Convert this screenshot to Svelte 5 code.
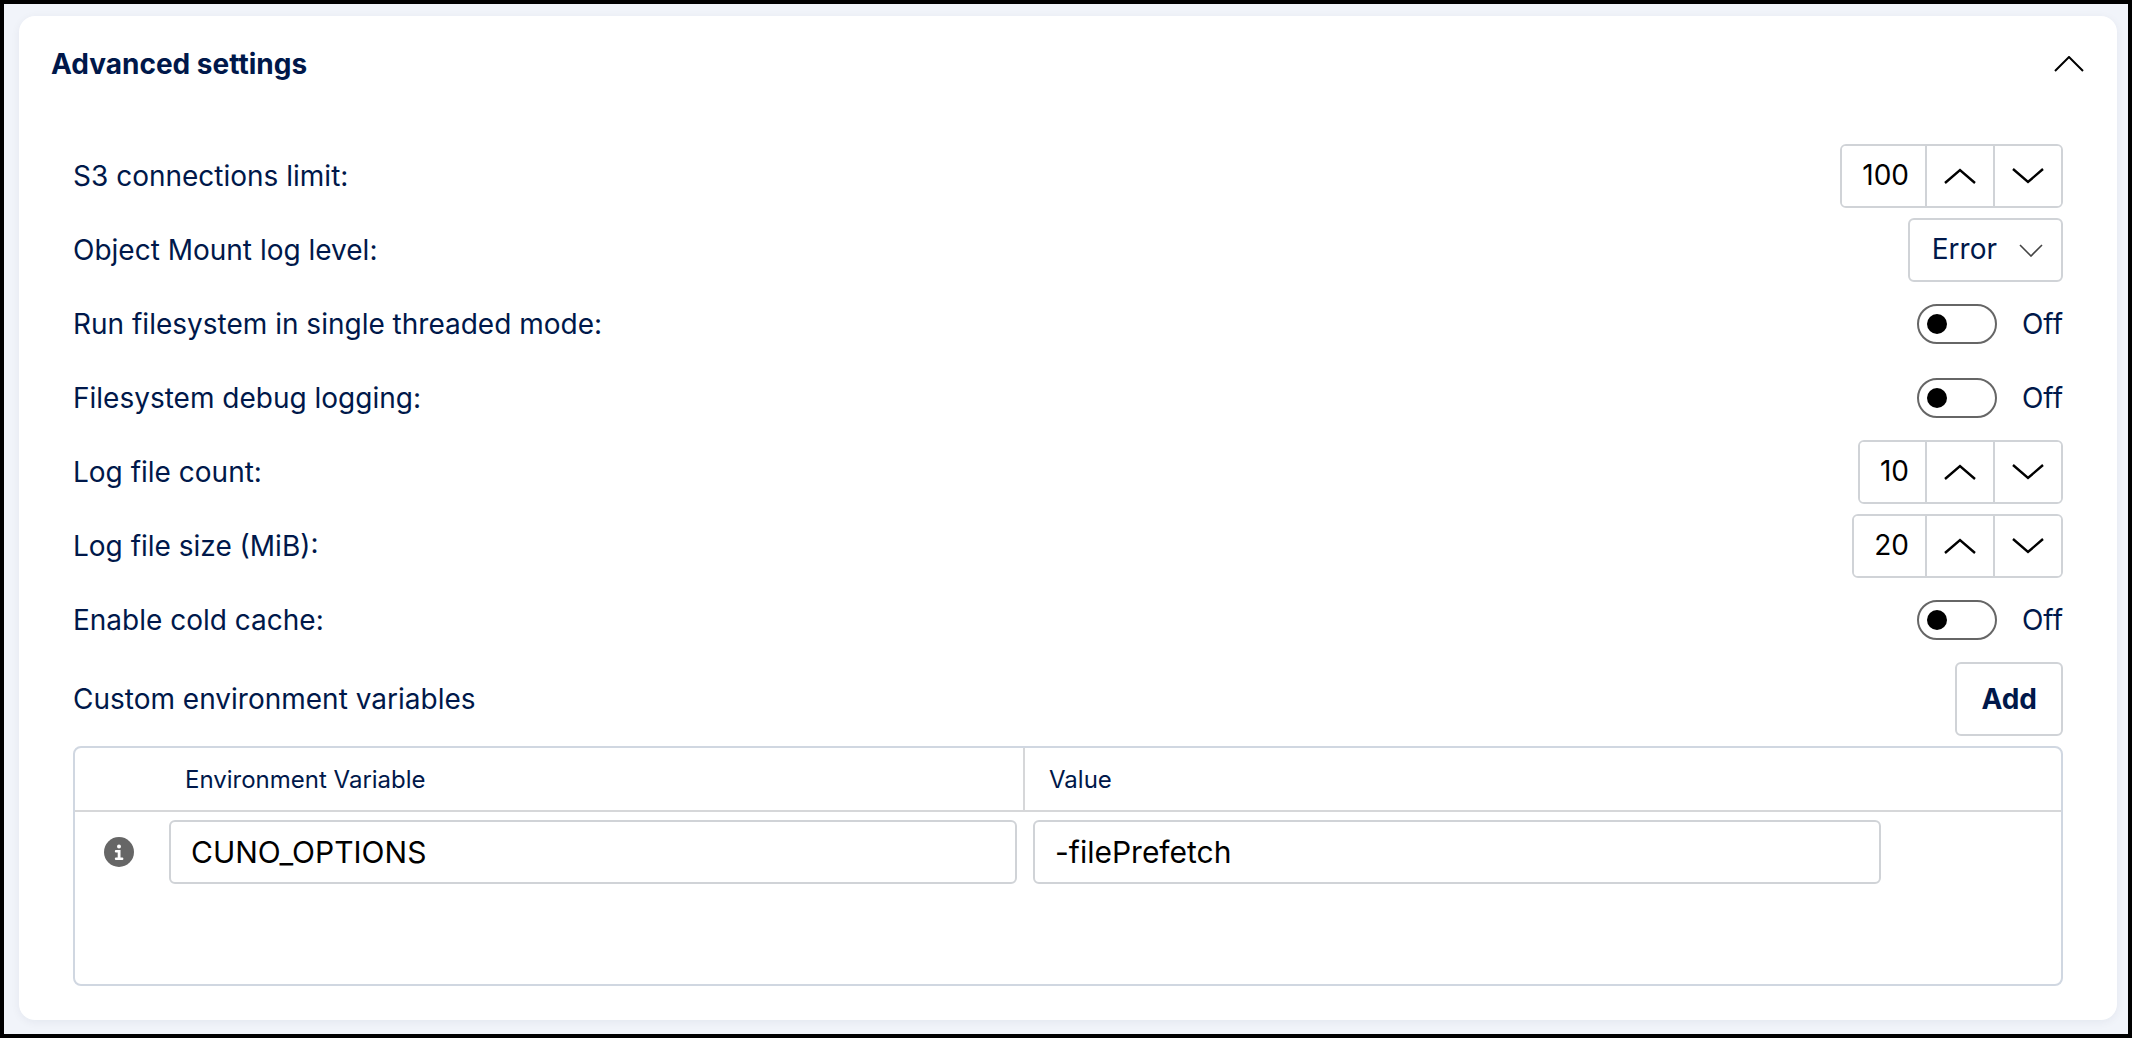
<script lang="ts">
  type StepperRow = { kind: "stepper"; id: string; label: string; value: number };
  type SelectRow = { kind: "select"; id: string; label: string; value: string; options: string[] };
  type ToggleRow = { kind: "toggle"; id: string; label: string; value: boolean };
  type Row = StepperRow | SelectRow | ToggleRow;

  let open = $state(true);

  let rows = $state<Row[]>([
    { kind: "stepper", id: "s3-limit", label: "S3 connections limit:", value: 100 },
    {
      kind: "select",
      id: "log-level",
      label: "Object Mount log level:",
      value: "Error",
      options: ["Error", "Warn", "Info", "Debug"],
    },
    {
      kind: "toggle",
      id: "single-threaded",
      label: "Run filesystem in single threaded mode:",
      value: false,
    },
    { kind: "toggle", id: "debug-logging", label: "Filesystem debug logging:", value: false },
    { kind: "stepper", id: "log-count", label: "Log file count:", value: 10 },
    { kind: "stepper", id: "log-size", label: "Log file size (MiB):", value: 20 },
    { kind: "toggle", id: "cold-cache", label: "Enable cold cache:", value: false },
  ]);

  let variables = $state([{ name: "CUNO_OPTIONS", value: "-filePrefetch" }]);

  function step(row: StepperRow, amount: number) {
    row.value = Math.max(0, row.value + amount);
  }

  function addVariable() {
    variables.push({ name: "", value: "" });
  }
</script>

{#snippet chevron(direction: "up" | "down")}
  <svg class="chevron" viewBox="0 0 32 16" aria-hidden="true">
    <path d={direction === "up" ? "M1 15 16 2 31 15" : "M1 1 16 14 31 1"}></path>
  </svg>
{/snippet}

<main class="page">
  <section class="card">
    <header class="card-header">
      <h2>Advanced settings</h2>
      <button
        class="collapse"
        type="button"
        aria-label="Toggle advanced settings"
        aria-expanded={open}
        onclick={() => (open = !open)}
      >
        <svg viewBox="0 0 30 16" aria-hidden="true">
          <path d={open ? "M1 15 15 1 29 15" : "M1 1 15 15 29 1"}></path>
        </svg>
      </button>
    </header>

    {#if open}
      <div class="settings">
        {#each rows as row (row.id)}
          <div class="row">
            <label for={row.id}>{row.label}</label>

            {#if row.kind === "stepper"}
              <div class="stepper">
                <input id={row.id} type="number" min="0" bind:value={row.value} />
                <button type="button" aria-label="Increase" onclick={() => step(row, 1)}>
                  {@render chevron("up")}
                </button>
                <button type="button" aria-label="Decrease" onclick={() => step(row, -1)}>
                  {@render chevron("down")}
                </button>
              </div>
            {:else if row.kind === "select"}
              <div class="select">
                <select id={row.id} bind:value={row.value}>
                  {#each row.options as option (option)}
                    <option>{option}</option>
                  {/each}
                </select>
                <svg viewBox="0 0 24 13" aria-hidden="true">
                  <path d="M1 1 12 12 23 1"></path>
                </svg>
              </div>
            {:else}
              <div class="toggle">
                <input id={row.id} type="checkbox" role="switch" bind:checked={row.value} />
                <span>{row.value ? "On" : "Off"}</span>
              </div>
            {/if}
          </div>
        {/each}

        <div class="row">
          <span>Custom environment variables</span>
          <button class="add" type="button" onclick={addVariable}>Add</button>
        </div>

        <div class="table-frame">
          <table>
            <thead>
              <tr>
                <th class="info-col"></th>
                <th class="divided">Environment Variable</th>
                <th>Value</th>
                <th class="action-col"></th>
              </tr>
            </thead>
            <tbody>
              {#each variables as variable, index (index)}
                <tr>
                  <td class="info-cell">
                    <svg viewBox="0 0 30 30" role="img" aria-label="Info">
                      <circle class="disc" cx="15" cy="15" r="15"></circle>
                      <circle class="mark" cx="15" cy="9.5" r="2"></circle>
                      <path
                        class="mark"
                        d="M12 13h4.5v7.5h1.7a1.2 1.2 0 0 1 0 2.4h-6.2a1.2 1.2 0 0 1 0-2.4h1.7v-5.1h-1.7a1.2 1.2 0 0 1 0-2.4z"
                      ></path>
                    </svg>
                  </td>
                  <td>
                    <input type="text" aria-label="Environment Variable" bind:value={variable.name} />
                  </td>
                  <td>
                    <input type="text" aria-label="Value" bind:value={variable.value} />
                  </td>
                  <td></td>
                </tr>
              {/each}
            </tbody>
          </table>
        </div>
      </div>
    {/if}
  </section>
</main>

<style>
  :global(body) {
    background: #f1f4fa;
  }

  .page {
    --ink: #00184a;
    --line: #d0d3d7;
    --frame: #d0d7e1;

    box-sizing: border-box;
    min-height: 100vh;
    padding: 12px 11px 14px 15px;
    border: 4px solid #000;
    background: #f1f4fa;
    color: var(--ink);
    font-family: Inter, sans-serif;
    font-size: 28px;
    line-height: 36px;
  }

  .card {
    padding-bottom: 34px;
    border-radius: 16px;
    background: #fff;
    box-shadow: 0 2px 10px rgba(20, 30, 70, 0.06);
  }

  .card-header {
    display: flex;
    align-items: center;
    justify-content: space-between;
    height: 96px;
    padding: 0 33px 0 32px;
  }

  h2 {
    margin: 0;
    font-size: 28px;
    font-weight: 700;
  }

  button,
  input,
  select {
    box-sizing: border-box;
    margin: 0;
    background: #fff;
    font: inherit;
    color: inherit;
  }

  button {
    cursor: pointer;
  }

  svg {
    display: block;
    fill: none;
    stroke: #000;
    stroke-width: 2;
  }

  .collapse {
    padding: 0;
    border: 0;
  }

  .collapse svg {
    width: 30px;
    height: 16px;
  }

  .settings {
    display: flex;
    flex-direction: column;
    gap: 10px;
    padding: 32px 54px 0;
  }

  .row {
    display: flex;
    align-items: center;
    justify-content: space-between;
    min-height: 64px;
  }

  .stepper {
    display: flex;
    box-sizing: border-box;
    height: 64px;
    overflow: hidden;
    border: 2px solid var(--line);
    border-radius: 6px;
    color: #000;
  }

  .stepper input {
    padding: 0 16px 2px 20px;
    border: 0;
    appearance: textfield;
    field-sizing: content;
  }

  .stepper input::-webkit-inner-spin-button {
    display: none;
  }

  .stepper button {
    display: grid;
    place-items: center;
    width: 68px;
    padding: 0;
    border: 0;
    border-left: 2px solid var(--line);
  }

  .chevron {
    width: 32px;
    height: 16px;
    stroke-width: 2.4;
  }

  .select {
    display: grid;
    align-items: center;
  }

  .select select {
    grid-area: 1 / 1;
    height: 64px;
    padding: 0 64px 2px 22px;
    border: 2px solid var(--line);
    border-radius: 6px;
    appearance: none;
    field-sizing: content;
  }

  .select svg {
    grid-area: 1 / 1;
    justify-self: end;
    width: 24px;
    height: 13px;
    margin-right: 20px;
    stroke: #444;
    stroke-width: 1.6;
    pointer-events: none;
  }

  .toggle {
    display: flex;
    align-items: center;
    gap: 25px;
  }

  .toggle input {
    display: flex;
    align-items: center;
    width: 80px;
    height: 40px;
    padding: 0 8px;
    border: 2px solid #666;
    border-radius: 20px;
    appearance: none;
  }

  .toggle input::before {
    content: "";
    width: 20px;
    height: 20px;
    border-radius: 50%;
    background: #000;
  }

  .toggle input:checked {
    justify-content: flex-end;
  }

  .add {
    height: 74px;
    padding: 0 24px;
    border: 2px solid var(--line);
    border-radius: 6px;
    font-weight: 700;
  }

  .table-frame {
    min-height: 236px;
    border: 2px solid var(--frame);
    border-radius: 8px;
  }

  table {
    width: 100%;
    border-collapse: separate;
    border-spacing: 0;
    table-layout: fixed;
  }

  th {
    box-sizing: border-box;
    height: 64px;
    padding: 2px 24px 0;
    border-bottom: 2px solid #d6d7d9;
    font-size: 24px;
    font-weight: 400;
    text-align: left;
  }

  th.divided {
    border-right: 2px solid #d6d7d9;
  }

  .info-col {
    width: 86px;
  }

  .action-col {
    width: 172px;
  }

  td {
    padding: 8px;
  }

  td.info-cell {
    padding-left: 10px;
  }

  td input {
    display: block;
    width: 100%;
    height: 64px;
    padding: 0 20px;
    border: 2px solid var(--line);
    border-radius: 6px;
    color: #000;
    font-size: 30px;
  }

  .info-cell svg {
    width: 30px;
    height: 30px;
    margin: 0 auto;
    stroke: none;
  }

  .disc {
    fill: #666;
  }

  .mark {
    fill: #fff;
  }
</style>
